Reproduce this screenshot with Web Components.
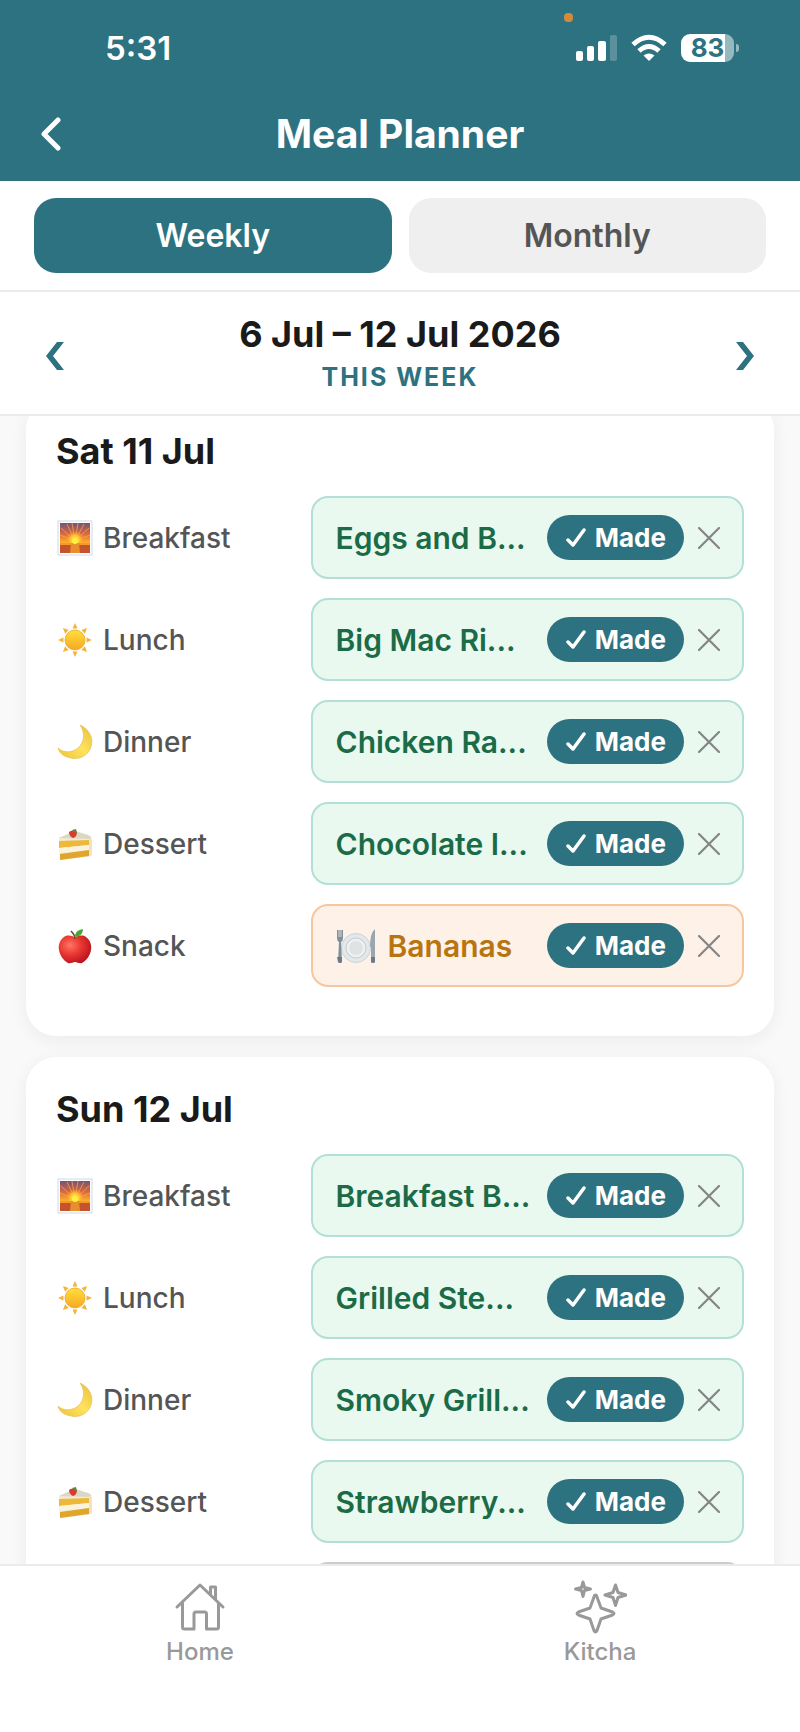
<!DOCTYPE html>
<html lang="en">
<head>
<meta charset="utf-8">
<meta name="viewport" content="width=device-width, initial-scale=1">
<title>Meal Planner</title>
<style>
  :root {
    --teal: #2d7280;
    --ink: #1a1a1a;
    --muted: #555;
    --line: #ebebeb;
  }
  body {
    margin: 0;
    font-family: Inter, "Liberation Sans", sans-serif;
    color: var(--ink);
    background: #fff;
  }
</style>
</head>
<body>
<planner-app>
  <status-bar slot="top" time="5:31" battery="83"></status-bar>
  <title-bar slot="top">Meal Planner</title-bar>
  <view-tabs slot="top"></view-tabs>
  <week-nav slot="top" note="THIS WEEK">6 Jul – 12 Jul 2026</week-nav>

  <day-card day="Sat 11 Jul">
    <meal-row icon="sunrise" label="Breakfast">Eggs and B...</meal-row>
    <meal-row icon="sun" label="Lunch">Big Mac Ri...</meal-row>
    <meal-row icon="moon" label="Dinner">Chicken Ra...</meal-row>
    <meal-row icon="cake" label="Dessert">Chocolate I...</meal-row>
    <meal-row icon="apple" label="Snack" custom>Bananas</meal-row>
  </day-card>
  <day-card day="Sun 12 Jul">
    <meal-row icon="sunrise" label="Breakfast">Breakfast B...</meal-row>
    <meal-row icon="sun" label="Lunch">Grilled Ste...</meal-row>
    <meal-row icon="moon" label="Dinner">Smoky Grill...</meal-row>
    <meal-row icon="cake" label="Dessert">Strawberry...</meal-row>
    <meal-row empty></meal-row>
  </day-card>

  <bottom-nav slot="bottom"></bottom-nav>
</planner-app>

<script>
// Meal pictures, all on a 36x36 grid
const MEAL_ICONS = {
  sunrise: `
    <defs>
      <linearGradient id="sky" x1="0" y1="0" x2="0" y2="1">
        <stop offset="0" stop-color="#6f5578"/><stop offset=".35" stop-color="#d8663f"/><stop offset=".65" stop-color="#ffab2c"/>
      </linearGradient>
      <radialGradient id="glow"><stop offset="0" stop-color="#fff36b"/><stop offset=".5" stop-color="#ffc72e"/><stop offset="1" stop-color="#ff9a2e" stop-opacity="0"/></radialGradient>
    </defs>
    <rect x="1" y="1" width="34" height="34" fill="#fff" stroke="#ccdbe5"/>
    <rect x="3" y="3" width="30" height="30" fill="url(#sky)"/>
    <path d="M18 21 3 15M18 21 4 8M18 21 10 4M18 21 15 3M18 21 21 3M18 21 27 4M18 21 32 8M18 21 33 15" stroke="#ff9f4a" stroke-width=".8"/>
    <circle cx="18" cy="20" r="9" fill="url(#glow)"/>
    <rect x="3" y="23" width="30" height="10" fill="#c3542d"/>
    <path d="M3 23h30v2H3z" fill="#f59a2a"/>
    <path d="M14 23h8l1 10H13z" fill="#e98e2c"/>
    <circle cx="18" cy="21" r="3" fill="#ffee45"/>`,
  sun: `
    <defs><linearGradient id="disc" x1="0" y1="0" x2="0" y2="1"><stop offset="0" stop-color="#ffe03a"/><stop offset="1" stop-color="#f7a823"/></linearGradient></defs>
    <g fill="#f3b43a">
      <path id="ray" d="M18 1l2.500 5.500h-5z"/>
      <use href="#ray" transform="rotate(45 18 18)"/><use href="#ray" transform="rotate(90 18 18)"/>
      <use href="#ray" transform="rotate(135 18 18)"/><use href="#ray" transform="rotate(180 18 18)"/>
      <use href="#ray" transform="rotate(225 18 18)"/><use href="#ray" transform="rotate(270 18 18)"/>
      <use href="#ray" transform="rotate(315 18 18)"/>
    </g>
    <circle cx="18" cy="18" r="10" fill="url(#disc)" stroke="#e9a52b" stroke-width=".8"/>`,
  moon: `
    <defs><linearGradient id="crescent" x1="1" y1="0" x2="0" y2="1"><stop offset="0" stop-color="#e8bf3c"/><stop offset=".5" stop-color="#ffe25e"/><stop offset="1" stop-color="#eec238"/></linearGradient></defs>
    <path d="M23 1C32 5 37 14 34 23 31 32 22 36 14 34 7 33 2 29 1 24c5 5 14 5 20 0C28 18 28 8 23 1z" fill="url(#crescent)" stroke="#e2b945" stroke-width=".6"/>`,
  cake: `
    <path d="M2 12 18 5l13 4q4 1 4 5v14q0 2-3 2.500L3 34z" fill="#f4ead0"/>
    <path d="M2 12 18 5l13 4q3 1 3 3l-2 1z" fill="#d9d8c6"/>
    <path d="M2 15l30-1v5L2 22z" fill="#eeb83a"/>
    <path d="M2 22l30-3v5L2 27z" fill="#fbf4dd"/>
    <path d="M3 28l29-4v6L3 34z" fill="#dfa52c"/>
    <path d="M32 13q3-1 3 2v12q0 3-3 3z" fill="#efe3c4"/>
    <path d="M12 6q3-3 8 0 0 5-4 6-4-2-4-6z" fill="#dc3a30"/>
    <path d="M15 4l4-1 1 4-3-1z" fill="#588a3c"/>`,
  apple: `
    <defs><radialGradient id="skin" cx=".35" cy=".35" r=".7"><stop offset="0" stop-color="#ff7564"/><stop offset=".5" stop-color="#e93630"/><stop offset="1" stop-color="#b91420"/></radialGradient></defs>
    <path d="M18 10c3-3 8-3 11-1 4 3 6 8 5 13-1 6-5 11-9 13-2 1-5-1-7-1s-5 2-7 1c-4-2-8-7-9-13C1 17 3 12 7 9c3-2 8-2 11 1z" fill="url(#skin)"/>
    <path d="M18 11q0-4-4-8" fill="none" stroke="#6b4526" stroke-width="1.500"/>
    <path d="M18 9q0-7 8-8 0 7-8 8z" fill="#48a52f"/>`
};

const PLATE_ICON = `
  <svg class="plate" viewBox="0 0 40 36" aria-hidden="true">
    <circle cx="20" cy="20" r="14.500" fill="#e3e8ea" stroke="#ced3d7"/>
    <circle cx="20" cy="20" r="10" fill="#eff1f1" stroke="#c5cbcf"/>
    <circle cx="20" cy="20" r="7" fill="#dfe3e3"/>
    <path d="M1 2v8q0 3 2 4l-1 20q2 2 4 0L5 14q2-1 2-4V2" fill="#7f8f9e" />
    <path d="M3 2v7M5 2v7" stroke="#f4efe9" stroke-width=".8"/>
    <path d="M39 1q-5 4-5 18h1v15q2 2 4 0z" fill="#9ba5ae"/>
    <path d="M1 29h5v5q-2 2-4 0zM35 29h4v5q-2 2-4 0z" fill="#6c7988"/>
  </svg>`;

class PlannerApp extends HTMLElement {
  constructor() {
    super();
    this.attachShadow({ mode: "open" });
    this.shadowRoot.innerHTML = `
      <style>
        :host { display: flex; flex-direction: column; height: 100vh; }
        header, footer { flex: none; }
        main {
          flex: 1;
          min-height: 0;
          overflow-y: auto;
          scrollbar-width: none;
          display: flex;
          flex-direction: column;
          gap: 21px;
          padding: 20px 26px;
          background: #f9f9f9;
        }
      </style>
      <header><slot name="top"></slot></header>
      <main><slot></slot></main>
      <footer><slot name="bottom"></slot></footer>`;
  }

  // The list opens a little way down
  connectedCallback() {
    requestAnimationFrame(() => {
      this.shadowRoot.querySelector("main").scrollTop = 37;
    });
  }
}

class StatusBar extends HTMLElement {
  connectedCallback() {
    this.attachShadow({ mode: "open" });
    this.shadowRoot.innerHTML = `
      <style>
        :host {
          display: flex;
          align-items: center;
          justify-content: space-between;
          height: 95px;
          padding: 0 61px 0 105px;
          position: relative;
          background: var(--teal);
          color: #fff;
        }
        time { font-size: 33px; font-weight: 600; line-height: 40px; }
        .icons { display: flex; align-items: center; gap: 14px; }
        svg { display: block; }
        .battery { display: flex; align-items: center; gap: 2px; }
        .level {
          width: 53px;
          height: 28px;
          border-radius: 9px;
          background: linear-gradient(90deg, #fff 83%, #96b9c0 83%);
          color: var(--teal);
          font-size: 26px;
          font-weight: 700;
          line-height: 28px;
          text-align: center;
        }
        .nub { width: 3px; height: 8px; border-radius: 0 4px 4px 0; background: #96b9c0; }
        .dot {
          position: absolute;
          top: 13px;
          left: 71%;
          width: 9px;
          height: 9px;
          margin-left: -4px;
          border-radius: 4px;
          background: #d48a3a;
        }
      </style>
      <span class="dot"></span>
      <time>${this.getAttribute("time")}</time>
      <div class="icons">
        <svg width="41" height="28" viewBox="0 0 41 28" fill="#fff" aria-label="Signal">
          <rect y="17" width="7" height="10" rx="2"/>
          <rect x="11" y="12" width="7" height="15" rx="2"/>
          <rect x="22" y="7" width="8" height="20" rx="2"/>
          <rect x="34" y="1" width="7" height="26" rx="2" opacity=".22"/>
        </svg>
        <svg width="36" height="28" viewBox="0 0 36 28" fill="none" stroke="#fff" stroke-width="5" aria-label="Wi-Fi">
          <path d="M2 10.500q16-14.500 32 0"/>
          <path d="M8 17q10-9 20 0"/>
          <path d="M18 27l-5.500-5.500q5.500-4 11 0z" fill="#fff" stroke="none"/>
        </svg>
        <div class="battery"><span class="level">${this.getAttribute("battery")}</span><span class="nub"></span></div>
      </div>`;
  }
}

class TitleBar extends HTMLElement {
  constructor() {
    super();
    this.attachShadow({ mode: "open" });
    this.shadowRoot.innerHTML = `
      <style>
        :host {
          display: grid;
          grid-template-columns: 1fr auto 1fr;
          align-items: center;
          height: 78px;
          padding: 0 33px 8px;
          background: var(--teal);
          color: #fff;
        }
        h1 { margin: 0; font-size: 39px; font-weight: 700; line-height: 48px; }
        button { justify-self: start; padding: 4px 8px; border: 0; background: none; color: inherit; }
        svg { display: block; }
      </style>
      <button aria-label="Back">
        <svg width="20" height="34" viewBox="0 0 20 34" fill="none" stroke="currentColor" stroke-width="5" stroke-linecap="round" stroke-linejoin="round"><path d="M17 3 3 17l14 14"/></svg>
      </button>
      <h1><slot></slot></h1>`;
  }
}

class ViewTabs extends HTMLElement {
  constructor() {
    super();
    this.attachShadow({ mode: "open" });
    this.shadowRoot.innerHTML = `
      <style>
        :host {
          display: grid;
          grid-template-columns: 1fr 1fr;
          gap: 17px;
          padding: 17px 34px;
          border-bottom: 2px solid var(--line);
          background: #fff;
        }
        button {
          height: 75px;
          padding: 0;
          border: 0;
          border-radius: 22px;
          background: #efefef;
          color: var(--muted);
          font-family: inherit;
          font-size: 32px;
          font-weight: 600;
          line-height: 40px;
        }
        button[aria-pressed="true"] { background: var(--teal); color: #fff; }
      </style>
      <button aria-pressed="true">Weekly</button>
      <button aria-pressed="false">Monthly</button>`;

    const buttons = this.shadowRoot.querySelectorAll("button");
    buttons.forEach((button) => {
      button.addEventListener("click", () => {
        buttons.forEach((b) => b.setAttribute("aria-pressed", b === button));
      });
    });
  }
}

class WeekNav extends HTMLElement {
  connectedCallback() {
    this.attachShadow({ mode: "open" });
    this.shadowRoot.innerHTML = `
      <style>
        :host {
          display: flex;
          align-items: center;
          justify-content: space-between;
          height: 122px;
          padding: 0 38px;
          border-bottom: 2px solid var(--line);
          background: #fff;
        }
        button { padding: 14px 8px 8px; border: 0; background: none; color: var(--teal); }
        svg { display: block; }
        .week { text-align: center; }
        h2 { margin: 0; font-size: 36px; font-weight: 700; line-height: 48px; }
        p { margin: 0; font-size: 25px; font-weight: 700; line-height: 38px; letter-spacing: 2px; color: var(--teal); }
      </style>
      <button aria-label="Previous week">
        <svg width="18" height="28" viewBox="0 0 18 28" fill="currentColor"><path d="M0 14 11 0h7L7 14l11 14h-7z"/></svg>
      </button>
      <div class="week">
        <h2><slot></slot></h2>
        <p>${this.getAttribute("note")}</p>
      </div>
      <button aria-label="Next week">
        <svg width="18" height="28" viewBox="0 0 18 28" fill="currentColor"><path d="M18 14 7 0H0l11 14L0 28h7z"/></svg>
      </button>`;
  }
}

class DayCard extends HTMLElement {
  connectedCallback() {
    this.attachShadow({ mode: "open" });
    this.shadowRoot.innerHTML = `
      <style>
        :host {
          display: block;
          flex: none;
          padding: 30px 30px 49px;
          border-radius: 30px;
          background: #fff;
          box-shadow: 0 4px 18px rgba(0, 0, 0, .06);
        }
        h3 { margin: 0 0 23px; font-size: 36px; font-weight: 700; line-height: 44px; }
        .meals { display: grid; gap: 19px; }
      </style>
      <h3>${this.getAttribute("day")}</h3>
      <div class="meals"><slot></slot></div>`;
  }
}

class MealRow extends HTMLElement {
  html = `
    <div class="label">
      <svg class="icon" viewBox="0 0 36 36" aria-hidden="true">${MEAL_ICONS[this.getAttribute("icon")]}</svg>
      <span>${this.getAttribute("label")}</span>
    </div>
    <div class="chip">
      ${this.hasAttribute("custom") ? PLATE_ICON : ""}
      <span class="name"><slot></slot></span>
      <button class="made">
        <svg width="22" height="20" viewBox="0 0 22 20" fill="none" stroke="currentColor" stroke-width="3.500" stroke-linecap="round" stroke-linejoin="round"><path d="M3 12l5 5L19 2"/></svg>
        Made
      </button>
      <button class="remove" aria-label="Remove">
        <svg width="22" height="22" viewBox="0 0 22 22" stroke="currentColor" stroke-width="2.200" stroke-linecap="round"><path d="M1 1l20 20M21 1 1 21"/></svg>
      </button>
    </div>`

  css = `
    :host {
      display: grid;
      grid-template-columns: 37fr 63fr;
      align-items: center;
    }
    svg { display: block; flex: none; }
    .label {
      display: flex;
      align-items: center;
      gap: 10px;
      color: var(--muted);
      font-size: 28px;
      font-weight: 500;
      line-height: 36px;
    }
    .icon { width: 36px; height: 36px; margin-left: 1px; }
    .chip {
      box-sizing: border-box;
      display: flex;
      align-items: center;
      min-width: 0;
      height: 83px;
      padding: 0 22px 0 23px;
      border: 2px solid #b2dfd6;
      border-radius: 17px;
      background: #e9f9f0;
      color: #1b6b47;
    }
    :host([custom]) .chip { border-color: #f6c79f; background: #fdf1e8; color: #b8740e; }
    .plate { width: 40px; height: 36px; margin-right: 12px; }
    .name {
      flex: 1;
      min-width: 0;
      overflow: hidden;
      white-space: nowrap;
      font-size: 30px;
      font-weight: 600;
      line-height: 38px;
    }
    button { border: 0; background: none; font-family: inherit; }
    .made {
      display: flex;
      align-items: center;
      gap: 8px;
      height: 45px;
      padding: 0 18px;
      border-radius: 23px;
      background: var(--teal);
      color: #fff;
      font-size: 26px;
      font-weight: 700;
      line-height: 32px;
    }
    .remove { margin-left: 14px; padding: 0; color: #858585; }
    .slot {
      grid-column: 2;
      box-sizing: border-box;
      height: 83px;
      border: 2px solid #ccc;
      border-radius: 17px;
      background: #fafafa;
    }`

  connectedCallback() {
    this.attachShadow({ mode: "open" });
    const body = this.hasAttribute("empty") ? `<button class="slot" aria-label="Add meal"></button>` : this.html;
    this.shadowRoot.innerHTML = `<style>${this.css}</style>` + body;
  }
}

class BottomNav extends HTMLElement {
  constructor() {
    super();
    this.attachShadow({ mode: "open" });
    this.shadowRoot.innerHTML = `
      <style>
        :host {
          display: grid;
          grid-template-columns: 1fr 1fr;
          height: 152px;
          padding-top: 14px;
          border-top: 2px solid var(--line);
          background: #fff;
        }
        a {
          display: flex;
          flex-direction: column;
          align-items: center;
          gap: 3px;
          color: #999;
          font-size: 24px;
          font-weight: 500;
          line-height: 30px;
          text-decoration: none;
        }
        svg { display: block; fill: none; stroke: currentColor; stroke-width: 3; stroke-linecap: round; stroke-linejoin: round; }
      </style>
      <a href="#home">
        <svg width="54" height="54" viewBox="0 0 54 54">
          <path d="M4 27 27 5l23 22M9.500 23v24q0 2 2 2H21V34q0-2 2-2h8.500q2 0 2 2v15h10q2 0 2-2V23M37.500 14V7h5v12"/>
        </svg>
        Home
      </a>
      <a href="#kitcha">
        <svg width="54" height="54" viewBox="0 0 54 54">
          <path d="M22.500 15q1 0 1.500 2l4 11 11.500 4q3 1.500 0 3L28 39l-4 11.500q-1.500 3-3 0L17 39 5.500 35q-3-1.500 0-3L17 28l4-11q.5-2 1.500-2z"/>
          <path d="M42.500 5l2.500 7.500 8 2.500-8 2.500-2.500 8-2.500-8-8-2.500 8-2.500z"/>
          <path d="M10 2l1.500 5.500L17.500 9l-6 1.500L10 16.500l-1.500-6-6-1.500 6-1.500z"/>
        </svg>
        Kitcha
      </a>`;
  }
}

customElements.define("planner-app", PlannerApp);
customElements.define("status-bar", StatusBar);
customElements.define("title-bar", TitleBar);
customElements.define("view-tabs", ViewTabs);
customElements.define("week-nav", WeekNav);
customElements.define("day-card", DayCard);
customElements.define("meal-row", MealRow);
customElements.define("bottom-nav", BottomNav);
</script>
</body>
</html>
